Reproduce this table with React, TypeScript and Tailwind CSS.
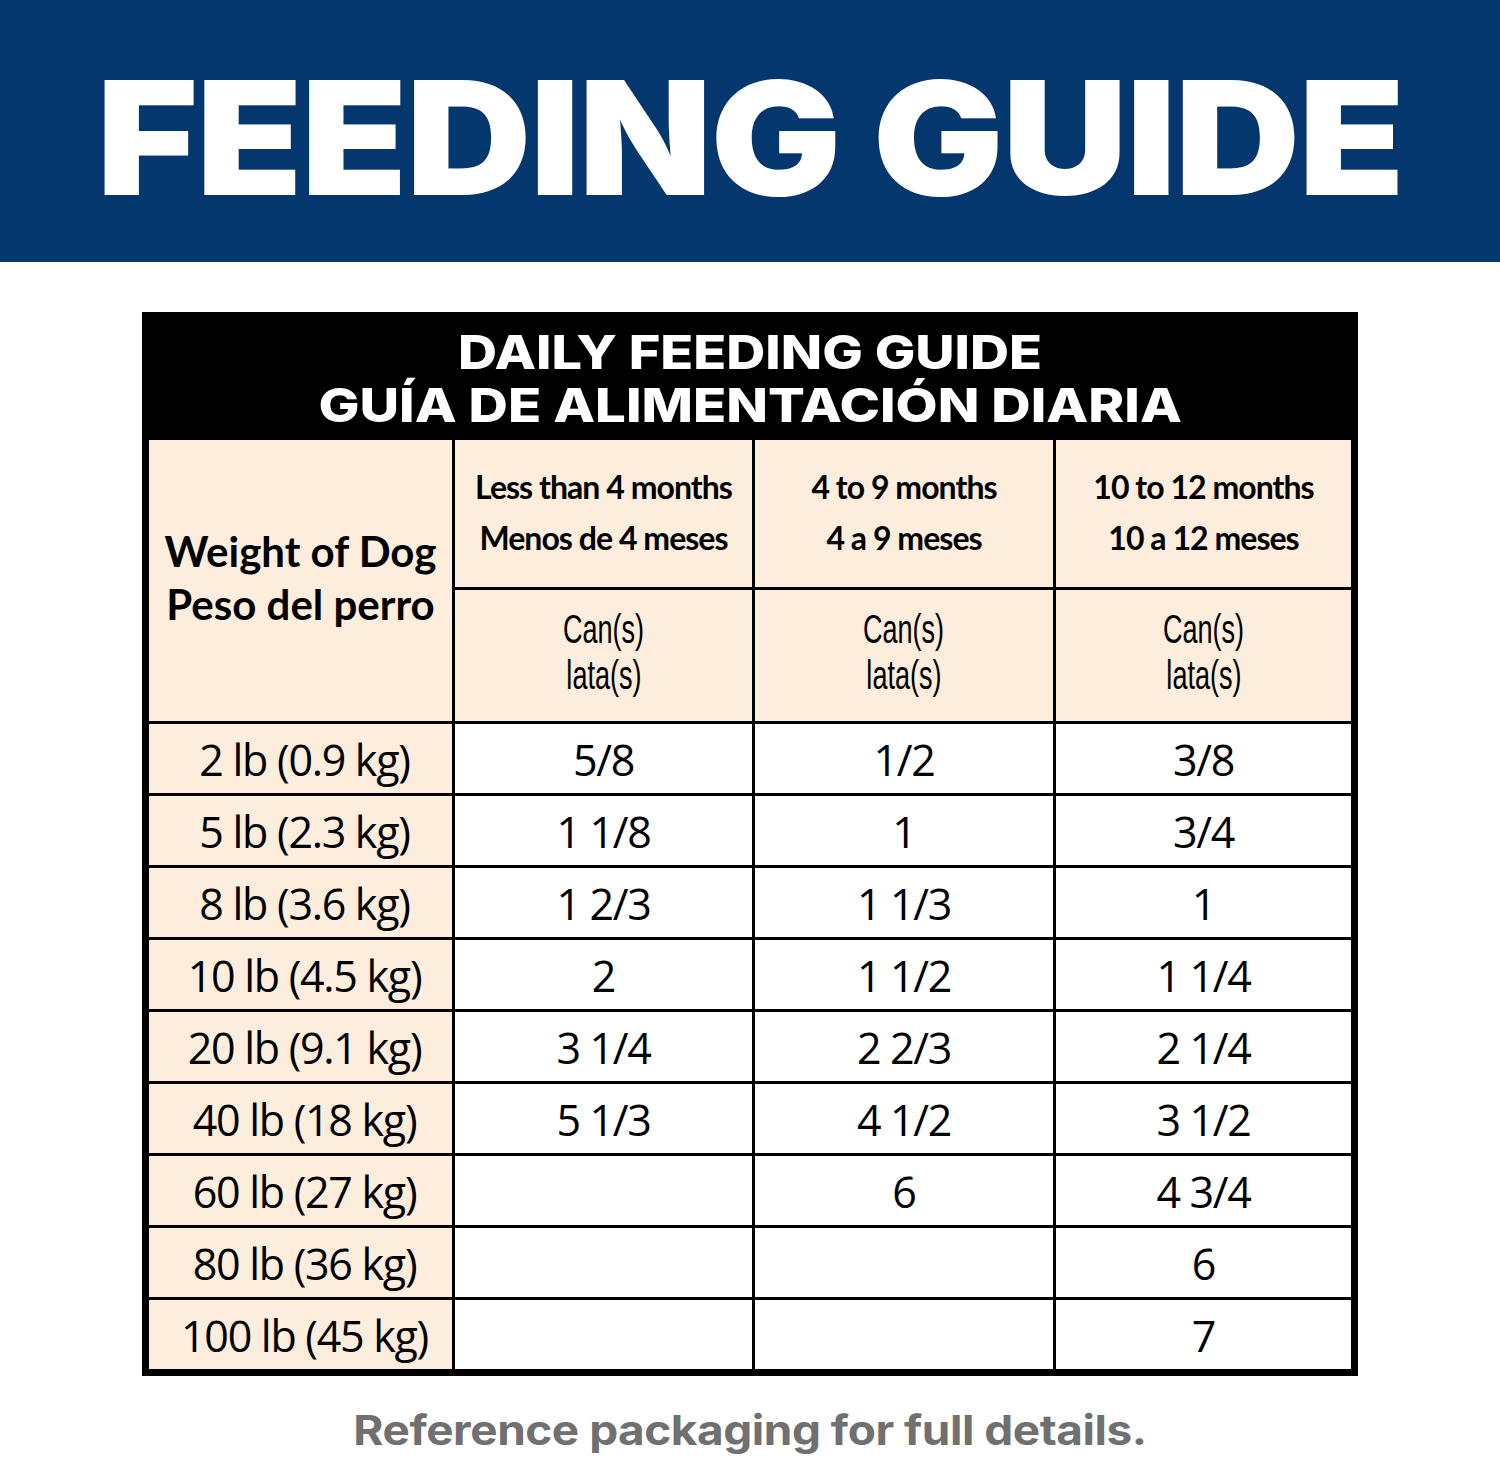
import React from 'react';

const rows = [
  { weight: '2 lb (0.9 kg)', a: '5/8', b: '1/2', c: '3/8' },
  { weight: '5 lb (2.3 kg)', a: '1 1/8', b: '1', c: '3/4' },
  { weight: '8 lb (3.6 kg)', a: '1 2/3', b: '1 1/3', c: '1' },
  { weight: '10 lb (4.5 kg)', a: '2', b: '1 1/2', c: '1 1/4' },
  { weight: '20 lb (9.1 kg)', a: '3 1/4', b: '2 2/3', c: '2 1/4' },
  { weight: '40 lb (18 kg)', a: '5 1/3', b: '4 1/2', c: '3 1/2' },
  { weight: '60 lb (27 kg)', a: '', b: '6', c: '4 3/4' },
  { weight: '80 lb (36 kg)', a: '', b: '', c: '6' },
  { weight: '100 lb (45 kg)', a: '', b: '', c: '7' },
];

const ages = [
  { en: 'Less than 4 months', es: 'Menos de 4 meses' },
  { en: '4 to 9 months', es: '4 a 9 meses' },
  { en: '10 to 12 months', es: '10 a 12 meses' },
];

const cols = 'grid grid-cols-[303px_300px_301px_1fr]';

const App: React.FC = () => {
  return (
    <div className="w-[1500px] h-[1457px] bg-white overflow-hidden">
      {/* Banner */}
      <div className="h-[262px] bg-[#05376f] flex items-center justify-center pt-[14px]">
        <h1 className="text-white font-['Inter',sans-serif] font-black text-[158px] leading-none tracking-[-0.01em] scale-x-[1.1]">
          FEEDING GUIDE
        </h1>
      </div>

      {/* Table */}
      <div className="mt-[50px] mx-auto w-[1216px] border-[7px] border-black bg-white">
        <div className="h-[121px] bg-black flex flex-col items-center justify-center pb-[4px] text-white font-['Inter',sans-serif] font-extrabold text-[47px] leading-[53px]">
          <div className="scale-x-[1.15]">DAILY FEEDING GUIDE</div>
          <div className="scale-x-[1.16]">GUÍA DE ALIMENTACIÓN DIARIA</div>
        </div>

        {/* Header */}
        <div className={`${cols} grid-rows-[147px_134px] bg-[#fdeddc]`}>
          <div className="row-span-2 flex flex-col items-center justify-center font-['Lato',sans-serif] font-bold text-[42px] leading-[53px] text-black pb-[6px]">
            <div>Weight of Dog</div>
            <div>Peso del perro</div>
          </div>
          {ages.map((age) => (
            <div
              key={age.en}
              className="border-l-[3px] border-black flex flex-col items-center justify-center font-['Lato',sans-serif] font-bold text-[32px] leading-[51px] text-black tracking-[-0.03em] pb-[4px]"
            >
              <div>{age.en}</div>
              <div>{age.es}</div>
            </div>
          ))}
          {ages.map((age) => (
            <div
              key={age.es}
              className="border-l-[3px] border-t-[3px] border-black flex flex-col items-center justify-center font-['Liberation_Sans',sans-serif] text-[41px] leading-[46px] text-black pb-[8px]"
            >
              <div className="scale-x-[0.66]">Can(s)</div>
              <div className="scale-x-[0.66]">lata(s)</div>
            </div>
          ))}
        </div>

        {/* Rows */}
        {rows.map((row) => (
          <div
            key={row.weight}
            className={`${cols} h-[72px] border-t-[3px] border-black font-['Open_Sans',sans-serif] text-[43px] text-black tracking-[-0.03em]`}
          >
            <div className="bg-[#fdeddc] flex items-center justify-center pt-[4px] pl-[8px]">{row.weight}</div>
            <div className="border-l-[3px] border-black flex items-center justify-center pt-[4px]">{row.a}</div>
            <div className="border-l-[3px] border-black flex items-center justify-center pt-[4px]">{row.b}</div>
            <div className="border-l-[3px] border-black flex items-center justify-center pt-[4px]">{row.c}</div>
          </div>
        ))}
      </div>

      <p className="mt-[34px] text-center text-[#707070] font-['Inter',sans-serif] font-bold text-[41px] leading-none tracking-[-0.01em] scale-x-[1.12]">
        Reference packaging for full details.
      </p>
    </div>
  );
};

export default App;
